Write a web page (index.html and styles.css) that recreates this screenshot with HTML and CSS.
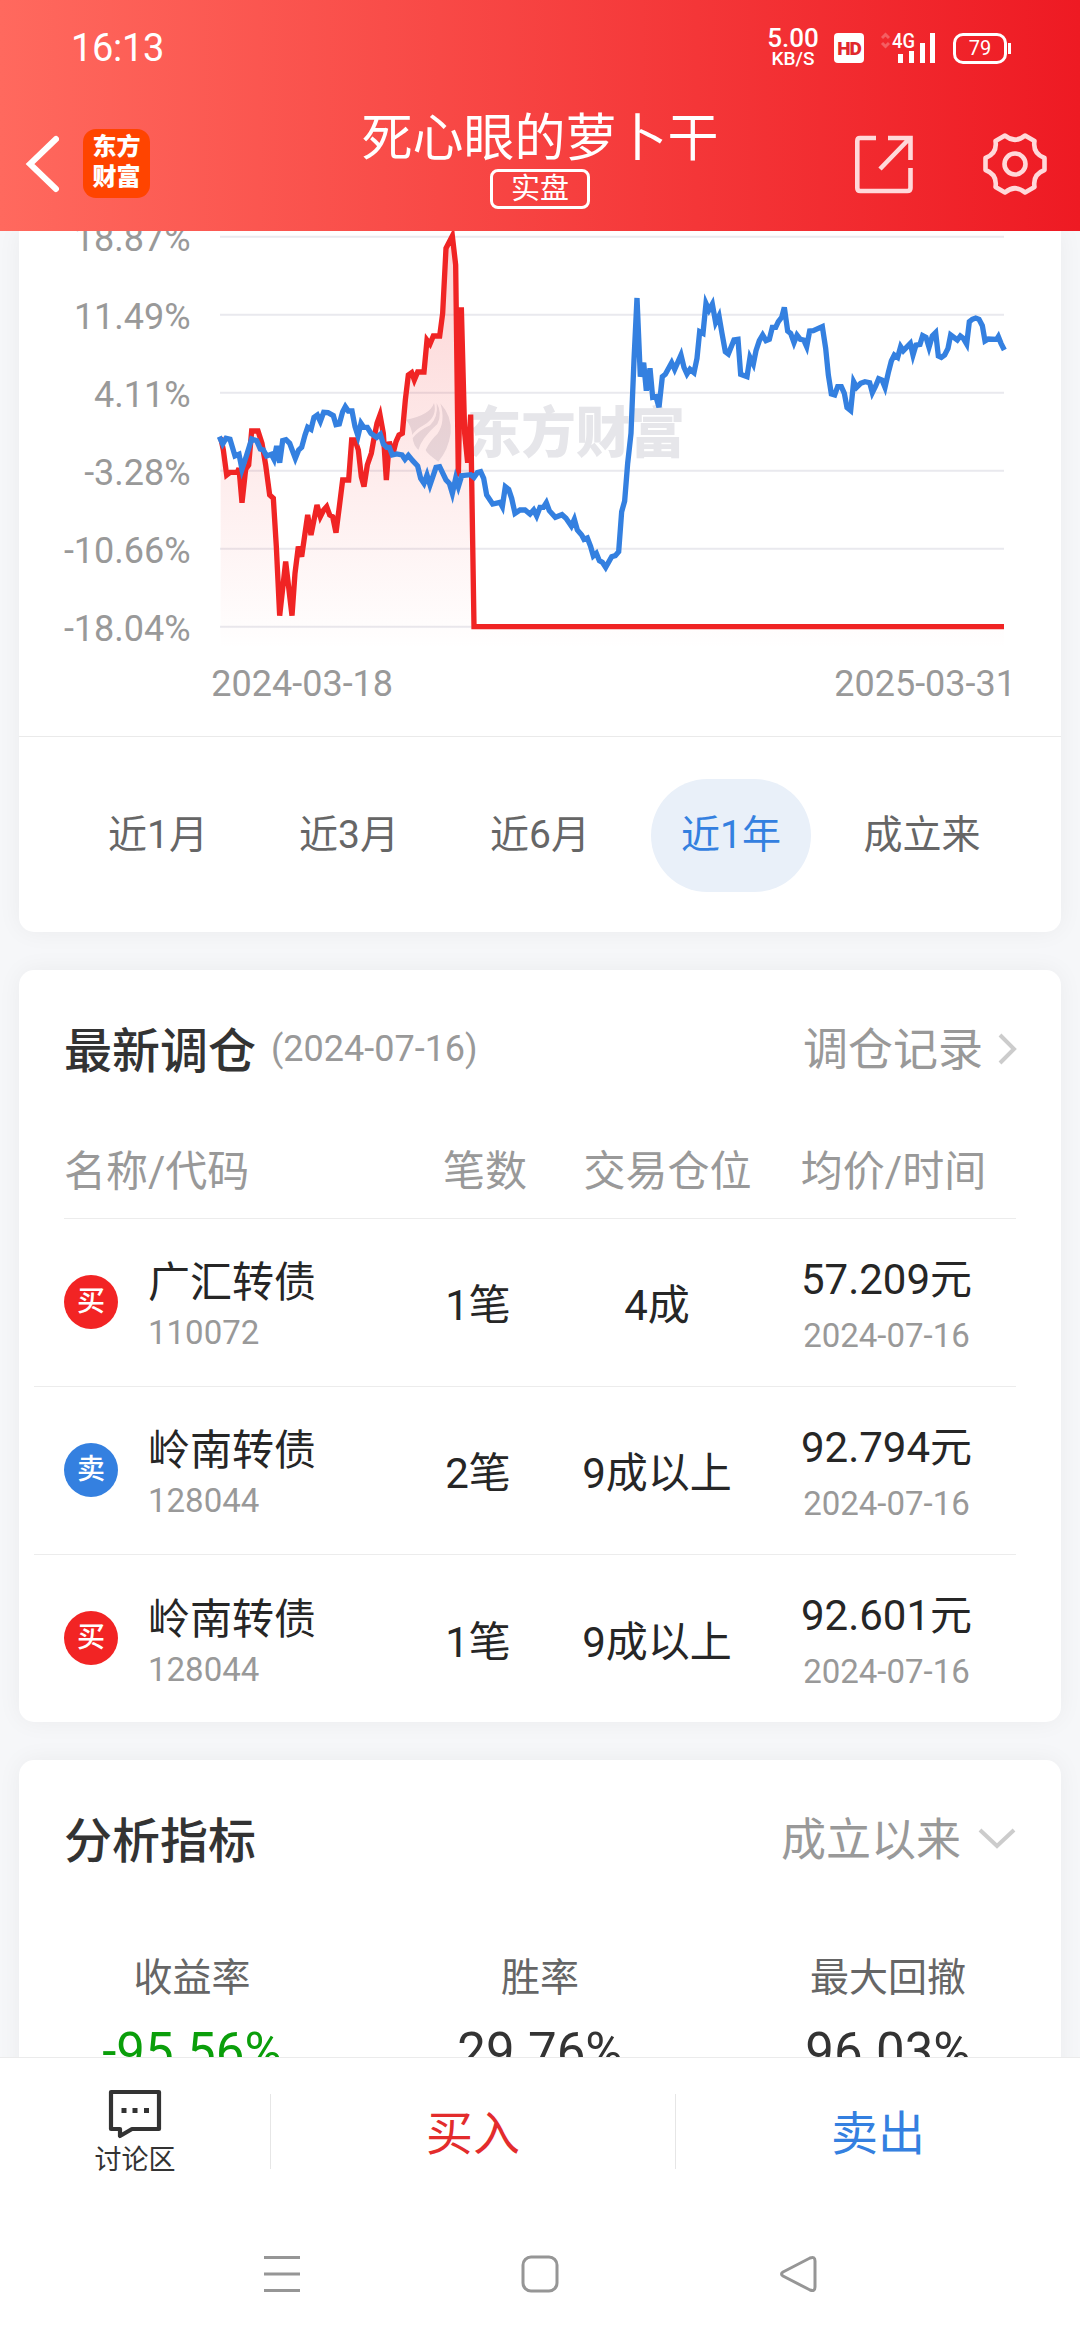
FILE: index.html
```html
<!DOCTYPE html>
<html lang="zh-CN">
<head>
<meta charset="UTF-8">
<title>死心眼的萝卜干</title>
<link rel="stylesheet" href="styles.css">
</head>
<body>
	<!-- 顶部 -->
	<header class="header">
		<div class="status">
			<span class="clock">16:13</span>
			<div class="speed"><b>5.00</b><span>KB/S</span></div>
			<span class="hd">HD</span>
			<svg class="signal" width="56" height="34" viewBox="0 0 56 34" fill="#fff">
				<path d="M3 7l3.500-3.500L10 7M3 12l3.500 3.500L10 12" fill="none" stroke="#fff" stroke-opacity=".25" stroke-width="3"/>
				<text x="13" y="17" textLength="23" lengthAdjust="spacingAndGlyphs">4G</text>
				<path d="M19 23h5v9h-5zM30 20h5v12h-5zM41 12h5v20h-5zM51 2h5v30h-5z"/>
			</svg>
			<div class="battery">79</div>
		</div>
		<div class="navbar">
			<div class="nav-left">
				<svg width="34" height="58" viewBox="0 0 34 58" fill="none" stroke="#fff" stroke-width="6" stroke-linecap="round"><path d="M31 4L5 29l26 25"/></svg>
				<div class="logo">东方<br>财富</div>
			</div>
			<div class="nav-title">
				<h1>死心眼的萝卜干</h1>
				<span class="real">实盘</span>
			</div>
			<div class="nav-right">
				<svg width="58" height="60" viewBox="0 0 58 60" fill="none" stroke="#ffd9da" stroke-width="4.6">
					<path d="M21 4H5Q2.3 4 2.3 7v47q0 3 3 3h47q3.200 0 3.200-3V34M33 4h22.500v22M54 5L25 35"/>
				</svg>
				<svg width="64" height="64" viewBox="-32 -32 64 64" fill="none" stroke="#ffd9da" stroke-width="4.600" stroke-linejoin="round">
					<circle r="10.500"/>
					<path d="M-10-28.500Q0-20 10-28.500L19.500-23Q17.500-10.500 29.500-6V6Q17.500 10.500 19.500 23L10 28.500Q0 20-10 28.500L-19.500 23Q-17.500 10.500-29.500 6V-6Q-17.500-10.500-19.500-23Z"/>
				</svg>
			</div>
		</div>
	</header>

	<main class="content">
		<!-- 收益走势 -->
		<section class="card chart-card">
			<svg class="chart" width="1042" height="505" viewBox="-543 33 3126 1515">
				<defs>
					<linearGradient id="area" gradientUnits="userSpaceOnUse" x1="0" y1="48" x2="0" y2="1290">
						<stop offset="0" stop-color="#f22424" stop-opacity=".2"/>
						<stop offset="1" stop-color="#f22424" stop-opacity="0"/>
					</linearGradient>
				</defs>
				<path class="grid" d="M60 50H2412M60 284H2412M60 518H2412M60 752H2412M60 986H2412M60 1220H2412"/>
				<g class="watermark">
					<path d="M618 599Q690 586 702 549Q714 590 672 615Q645 630 637 645Q634 618 618 599Z"/>
					<path d="M638 655Q655 632 690 616Q715 592 710 549Q728 580 712 612Q664 655 655 690Q640 675 638 655Z"/>
					<path d="M721 550Q757 590 752 640Q745 690 715 725Q680 700 677 690Q690 662 712 642Q738 605 721 550Z"/>
					<text x="800" y="697" textLength="655" lengthAdjust="spacingAndGlyphs">东方财富</text>
				</g>
				<path fill="url(#area)" d="M62 652L70 690 80 765 90 757 112 757 117 745 126 848 137 748 146 735 155 633 174 633 186 670 197 735 209 825 220 835 229 980 239 1187 257 1025 276 1187 285 1060 295 980 305 1010 315 940 323 885 333 945 343 895 351 855 361 890 371 870 380 860 389 885 398 890 408 938 418 860 428 780 446 780 455 660 465 660 475 690 484 770 492 800 502 735 514 700 522 655 531 610 540 585 550 640 559 780 568 665 578 705 588 665 597 645 607 640 616 540 625 465 635 458 643 480 653 456 672 456 681 360 690 372 700 348 719 348 728 280 738 85 757 48 767 135 775 770 784 262 794 640 803 728 812 584 822 1220H2412V1290H62Z"/>
				<polyline class="line red" points="62,652 70,690 80,765 90,757 112,757 117,745 126,848 137,748 146,735 155,633 174,633 186,670 197,735 209,825 220,835 229,980 239,1187 257,1025 276,1187 285,1060 295,980 305,1010 315,940 323,885 333,945 343,895 351,855 361,890 371,870 380,860 389,885 398,890 408,938 418,860 428,780 446,780 455,660 465,660 475,690 484,770 492,800 502,735 514,700 522,655 531,610 540,585 550,640 559,780 568,665 578,705 588,665 597,645 607,640 616,540 625,465 635,458 643,480 653,456 672,456 681,360 690,372 700,348 719,348 728,280 738,85 757,48 767,135 775,770 784,262 794,640 803,728 812,584 822,1220 2412,1220"/>
				<polyline class="line blue" points="58,650 68,672 78,655 90,658 105,708 117,703 126,748 140,705 155,657 170,662 181,687 190,690 200,708 214,703 222,718 230,678 239,728 248,662 258,659 269,670 286,715 296,690 305,682 315,645 323,622 333,628 342,592 352,585 361,604 371,577 384,578 400,587 408,614 418,612 428,575 436,560 445,573 456,573 465,620 474,648 483,610 491,622 502,622 513,640 530,652 541,643 550,672 560,682 568,682 577,705 590,702 606,705 615,718 625,706 638,722 653,738 662,775 672,790 681,765 690,795 708,742 719,740 738,780 748,790 757,820 767,775 775,800 785,767 812,764 822,772 832,758 842,755 851,775 860,825 878,852 900,847 907,860 916,800 926,808 935,835 945,880 960,870 975,870 990,882 1001,870 1010,888 1020,862 1030,862 1039,848 1048,872 1066,892 1086,884 1098,895 1114,918 1123,898 1132,930 1145,945 1152,958 1162,954 1172,980 1180,1008 1189,1000 1198,1022 1207,1027 1217,1042 1235,1010 1246,1007 1256,995 1265,875 1274,843 1283,730 1293,640 1302,420 1311,234 1321,470 1331,428 1339,512 1350,445 1358,532 1368,530 1377,562 1387,470 1396,463 1415,428 1424,448 1443,405 1452,442 1461,462 1470,448 1482,458 1491,415 1499,335 1509,340 1518,250 1527,270 1537,252 1547,308 1557,288 1566,340 1576,395 1585,402 1602,360 1614,358 1622,463 1641,470 1650,412 1660,432 1668,392 1678,362 1688,345 1698,362 1708,358 1717,322 1727,322 1735,305 1745,292 1753,262 1763,333 1772,340 1782,368 1791,345 1801,358 1811,360 1820,380 1829,333 1840,332 1867,320 1877,385 1885,465 1894,522 1904,525 1913,500 1924,500 1933,520 1941,563 1952,572 1961,485 1970,502 1982,490 1995,485 2009,488 2017,518 2027,498 2036,476 2046,480 2055,502 2065,458 2074,423 2083,405 2093,412 2102,380 2110,392 2131,370 2139,405 2148,375 2160,373 2168,347 2178,352 2187,382 2197,348 2207,338 2215,408 2224,412 2234,405 2244,385 2252,345 2272,360 2281,348 2290,355 2300,372 2308,305 2317,298 2327,294 2337,298 2347,317 2355,363 2365,357 2390,358 2395,350 2403,370 2413,390"/>
				<!-- 坐标轴 -->
				<g class="axis" text-anchor="end">
					<text x="-28" y="93">18.87%</text>
					<text x="-28" y="327">11.49%</text>
					<text x="-28" y="561">4.11%</text>
					<text x="-28" y="795">-3.28%</text>
					<text x="-28" y="1029">-10.66%</text>
					<text x="-28" y="1263">-18.04%</text>
					<text x="2448" y="1427">2025-03-31</text>
				</g>
				<text class="axis" x="34" y="1427">2024-03-18</text>
			</svg>
			<div class="tabs">
				<span>近1月</span>
				<span>近3月</span>
				<span>近6月</span>
				<span class="active">近1年</span>
				<span>成立来</span>
			</div>
		</section>

		<!-- 最新调仓 -->
		<section class="card trades">
			<div class="card-head">
				<h2>最新调仓</h2>
				<span class="date">(2024-07-16)</span>
				<span class="more">调仓记录</span>
				<svg class="arrow-right" width="20" height="32" viewBox="0 0 20 32" fill="none" stroke="#ccc" stroke-width="4"><path d="M3 2l14 14L3 30"/></svg>
			</div>
			<div class="row row-head">
				<span>名称/代码</span>
				<span>笔数</span>
				<span>交易仓位</span>
				<span>均价/时间</span>
			</div>
			<div class="row">
				<div class="stock"><i class="tag buy">买</i><div>广汇转债<small>110072</small></div></div>
				<span>1笔</span>
				<span>4成</span>
				<div class="price">57.209元<small>2024-07-16</small></div>
			</div>
			<div class="row">
				<div class="stock"><i class="tag sell">卖</i><div>岭南转债<small>128044</small></div></div>
				<span>2笔</span>
				<span>9成以上</span>
				<div class="price">92.794元<small>2024-07-16</small></div>
			</div>
			<div class="row">
				<div class="stock"><i class="tag buy">买</i><div>岭南转债<small>128044</small></div></div>
				<span>1笔</span>
				<span>9成以上</span>
				<div class="price">92.601元<small>2024-07-16</small></div>
			</div>
		</section>

		<!-- 分析指标 -->
		<section class="card analysis">
			<div class="card-head">
				<h2>分析指标</h2>
				<span class="more">成立以来</span>
				<svg class="arrow-down" width="38" height="22" viewBox="0 0 38 22" fill="none" stroke="#ccc" stroke-width="4"><path d="M2 2l17 16L36 2"/></svg>
			</div>
			<div class="metrics">
				<div>收益率<b class="down">-95.56%</b></div>
				<div>胜率<b>29.76%</b></div>
				<div>最大回撤<b>96.03%</b></div>
			</div>
		</section>
	</main>

	<!-- 底部操作栏 -->
	<footer class="actions">
		<div class="discuss">
			<svg width="54" height="52" viewBox="0 0 54 52" fill="none" stroke="#333" stroke-width="4.200" stroke-linejoin="round">
				<path d="M3 4h48v37H24L12 48v-7H3z"/>
				<path d="M13.500 22.500h5M24.500 22.500h5M36 22.500h5" stroke-width="5"/>
			</svg>
			讨论区
		</div>
		<div class="buy-btn">买入</div>
		<div class="sell-btn">卖出</div>
	</footer>
	<div class="system-bar">
		<svg width="36" height="38" viewBox="0 0 36 38"><path d="M0 2.500h36M0 19h36M0 35.500h36"/></svg>
		<svg width="38" height="38" viewBox="0 0 38 38"><rect x="2" y="2" width="34" height="34" rx="8"/></svg>
		<svg width="38" height="38" viewBox="0 0 38 38"><path d="M3 17L30 3Q35 1 35 6V32Q35 37 30 35L3 21Q0 19 3 17Z"/></svg>
	</div>
</body>
</html>
```
FILE: styles.css
```css
* {
  box-sizing: border-box;
}

body {
  margin: 0;
  width: 1080px;
  height: 2340px;
  display: flex;
  flex-direction: column;
  overflow: hidden;
  background-color: #f6f7f9;
  color: #262626;
  font-family: Roboto, "Noto Sans CJK SC", sans-serif;
  font-size: 42px;
  white-space: nowrap;
}

h1, h2 {
  margin: 0;
}

svg {
  display: block;
  flex-shrink: 0;
}

/* Шапка */
.header {
  height: 231px;
  flex-shrink: 0;
  background: linear-gradient(90deg, #ff695e, #ee1a23);
  color: #fff;
}

.status {
  height: 96px;
  display: flex;
  align-items: center;
  padding-left: 71px;
}

.clock {
  width: 695px;
  font-size: 38px;
  letter-spacing: -0.3px;
}

.speed {
  width: 54px;
  text-align: center;
  font-size: 19px;
  line-height: 20px;
  font-weight: 500;
}

.speed b {
  display: block;
  font-size: 26px;
  line-height: 22px;
  font-weight: 500;
}

.hd {
  width: 30px;
  height: 30px;
  margin-left: 14px;
  border-radius: 4px;
  background-color: #fff;
  color: #e0282c;
  font-size: 19px;
  line-height: 31px;
  font-weight: 900;
  text-align: center;
  letter-spacing: -1px;
}

.signal {
  margin-left: 15px;
  font-size: 20px;
  font-weight: 500;
}

.battery {
  position: relative;
  width: 54px;
  height: 31px;
  margin-left: 18px;
  border: 3px solid #fff;
  border-radius: 10px;
  font-size: 20px;
  line-height: 25px;
  text-align: center;
}

.battery::after {
  content: "";
  position: absolute;
  right: -7px;
  top: 7px;
  width: 3px;
  height: 11px;
  background-color: #fff;
}

.navbar {
  height: 135px;
  display: flex;
  justify-content: space-between;
  padding: 0 33px 0 25px;
}

.nav-left, .nav-right {
  width: 200px;
  display: flex;
  align-items: center;
}

.nav-left {
  gap: 24px;
}

.nav-right {
  width: 192px;
  justify-content: flex-end;
  gap: 70px;
}

.logo {
  width: 67px;
  height: 69px;
  border-radius: 13px;
  background-color: #ff4400;
  font-size: 24px;
  line-height: 30px;
  font-weight: 900;
  text-align: center;
  padding-top: 3px;
}

.nav-title {
  display: flex;
  flex-direction: column;
  align-items: center;
  padding-top: 13px;
}

.nav-title h1 {
  font-size: 51px;
  line-height: 60px;
  font-weight: 400;
}

.real {
  width: 100px;
  height: 40px;
  border: 3px solid #fff;
  border-radius: 8px;
  font-size: 29px;
  line-height: 35px;
  text-align: center;
}

/* Карточки */
.content {
  flex: 1;
  min-height: 0;
  overflow: hidden;
  padding: 0 19px;
}

.card {
  background-color: #fff;
  border-radius: 15px;
  box-shadow: 0 0 24px rgba(0,0,0,0.05);
  margin-bottom: 38px;
}

.chart-card {
  height: 701px;
  border-radius: 0 0 15px 15px;
}

.grid {
  stroke: #e9e9ee;
  stroke-width: 6;
}

.line {
  fill: none;
  stroke-width: 16;
}

.red {
  stroke: #f02424;
}

.blue {
  stroke: #3480e0;
}

.axis {
  fill: #999;
  font-size: 108px;
}

.watermark {
  fill: #e6e6ea;
  font-size: 165px;
  font-weight: 900;
}

.tabs {
  height: 196px;
  border-top: 1px solid #eaeaea;
  display: flex;
  align-items: center;
  justify-content: space-between;
  padding: 1px 59px 0;
  color: #666;
  font-size: 39px;
}

.tabs span {
  width: 160px;
  line-height: 113px;
  border-radius: 57px;
  text-align: center;
}

.tabs .active {
  background-color: #e9f0f9;
  color: #3480e0;
}

.card-head {
  display: flex;
  align-items: center;
  padding: 0 45px;
}

.card-head h2 {
  font-size: 48px;
  font-weight: 500;
  color: #333;
  padding-bottom: 5px;
}

.date {
  margin-left: 15px;
  font-size: 36px;
  color: #999;
}

.more {
  margin-left: auto;
  font-size: 45px;
  color: #999;
  padding-bottom: 5px;
}

.arrow-right {
  margin-left: 14px;
  margin-right: -1px;
}

.arrow-down {
  margin-left: 17px;
}

.trades {
  height: 752px;
}

.trades .card-head {
  height: 158px;
}

.row {
  height: 168px;
  margin: 0 45px 0 15px;
  padding-left: 30px;
  border-bottom: 1px solid #ececec;
  display: grid;
  grid-template-columns: 324px 180px 178px 1fr;
  align-items: center;
  text-align: center;
}

.row > span {
  padding-bottom: 2px;
}

.row:last-child {
  border-bottom: none;
}

.row-head {
  height: 91px;
  margin-left: 45px;
  padding: 0 0 9px;
  grid-template-columns: 331px 180px 185px 1fr;
  color: #999;
}

.row-head span:first-child {
  text-align: left;
}

.row-head span:last-child, .price {
  margin-right: -11px;
}

.stock {
  display: flex;
  align-items: center;
  gap: 30px;
  text-align: left;
  line-height: 54px;
}

.stock div {
  padding-top: 7px;
}

.tag {
  width: 54px;
  height: 54px;
  margin-bottom: 2px;
  border-radius: 50%;
  color: #fff;
  font-size: 28px;
  line-height: 53px;
  font-style: normal;
  font-weight: 500;
  text-align: center;
}

.buy {
  background-color: #f22424;
}

.sell {
  background-color: #3480e0;
}

small {
  display: block;
  color: #999;
  font-size: 33px;
  line-height: 46px;
}

.price {
  line-height: 60px;
  padding-top: 6px;
}

.price small {
  line-height: 52px;
}

.analysis {
  height: 500px;
}

.analysis .card-head {
  height: 158px;
}

.metrics {
  display: grid;
  grid-template-columns: repeat(3, 348px);
  margin-left: -1px;
  padding-top: 28px;
  text-align: center;
  color: #666;
  font-size: 39px;
  line-height: 64px;
}

.metrics b {
  display: block;
  color: #333;
  font-size: 51px;
  font-weight: 400;
  line-height: 84px;
}

.metrics .down {
  color: #0a9e0a;
}

/* Нижняя панель */
.actions {
  height: 147px;
  flex-shrink: 0;
  background-color: #fff;
  border-top: 1px solid #ebebeb;
  display: grid;
  grid-template-columns: 271px 405px 404px;
  align-items: center;
  text-align: center;
  font-size: 47px;
}

.actions > div {
  height: 75px;
  line-height: 79px;
  border-right: 1px solid #e6e6e6;
}

.actions > div:last-child {
  border-right: none;
}

.actions .discuss {
  display: flex;
  flex-direction: column;
  align-items: center;
  justify-content: center;
  padding-top: 6px;
  color: #333;
  font-size: 27px;
  line-height: 40px;
}

.buy-btn {
  color: #e32c2c;
}

.sell-btn {
  color: #3480e0;
}

.system-bar {
  height: 136px;
  flex-shrink: 0;
  background-color: #fff;
  display: flex;
  justify-content: center;
  gap: 221px;
  padding: 51px 0 0 2px;
}

.system-bar svg {
  fill: none;
  stroke: #969696;
  stroke-width: 3;
}
```
